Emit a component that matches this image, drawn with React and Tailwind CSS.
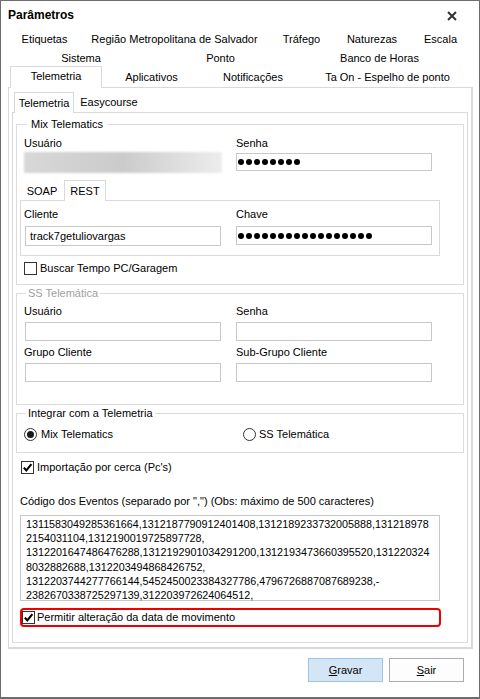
import React from "react";

const TOP_ROW = [
  ["Etiquetas", "w-[69px]"],
  ["Região Metropolitana de Salvador", "w-[191px]"],
  ["Tráfego", "w-[63px]"],
  ["Naturezas", "w-[78px]"],
  ["Escala", "w-[59px]"],
];

const MID_ROW = [
  ["Sistema", "w-[142px]"],
  ["Ponto", "w-[137px]"],
  ["Banco de Horas", "w-[181px]"],
];

const LAST_ROW = [
  ["Aplicativos", "w-[99px]"],
  ["Notificações", "w-[104px]"],
  ["Ta On - Espelho de ponto", "w-[165px]"],
];

const EVENT_LINES = [
  "1311583049285361664,1312187790912401408,1312189233732005888,131218978",
  "2154031104,1312190019725897728,",
  "1312201647486476288,1312192901034291200,1312193473660395520,131220324",
  "8032882688,1312203494868426752,",
  "1312203744277766144,5452450023384327786,4796726887087689238,-",
  "2382670338725297139,312203972624064512,",
];

function Check({ checked }) {
  return (
    <span className="w-[13px] h-[13px] border border-[#333333] bg-white flex items-center justify-center shrink-0">
      {checked && (
        <svg width="11" height="11" viewBox="0 0 11 11">
          <path d="M1.8 5.6 L4.3 8.3 L9.4 2.2" stroke="#000" strokeWidth="2.1" fill="none" />
        </svg>
      )}
    </span>
  );
}

function Radio({ on }) {
  return (
    <span className="w-[13px] h-[13px] rounded-full border border-[#333333] bg-white flex items-center justify-center shrink-0">
      {on && <span className="w-[7px] h-[7px] rounded-full bg-[#1a1a1a]" />}
    </span>
  );
}

function Dots({ count }) {
  return (
    <div className="flex items-center gap-[2px] pl-[1px] h-full">
      {Array.from({ length: count }).map((_, i) => (
        <span key={i} className="w-[6px] h-[6px] rounded-full bg-black" />
      ))}
    </div>
  );
}

function Box({ children, className = "" }) {
  return <div className={`w-[196px] border border-[#c8c8c8] bg-white ${className}`}>{children}</div>;
}

export default function App() {
  return (
    <div className="w-[480px] h-[699px] bg-white border border-b-2 border-[#6d6d6d] flex flex-col text-black text-[11px] leading-[13px] font-['Liberation_Sans',Arial,sans-serif]">
      {/* title bar */}
      <div className="h-[29px] flex items-center justify-between pl-[7px] pr-[22px]">
        <span className="font-bold text-[12px]">Parâmetros</span>
        <svg width="10" height="10" viewBox="0 0 10 10">
          <path d="M1 1L9 9M9 1L1 9" stroke="#333333" strokeWidth="2" />
        </svg>
      </div>

      {/* tab strip */}
      <div className="flex h-[19px] pl-[9px]">
        {TOP_ROW.map(([t, w]) => (
          <div key={t} className={`${w} flex items-center justify-center whitespace-nowrap`}>{t}</div>
        ))}
      </div>
      <div className="flex h-[19px] pl-[9px]">
        {MID_ROW.map(([t, w]) => (
          <div key={t} className={`${w} flex items-center justify-center whitespace-nowrap`}>{t}</div>
        ))}
      </div>
      <div className="flex h-[19px] pl-[9px]">
        <div className="w-[92px] h-[22px] -mt-[2px] border border-b-0 border-[#d9d9d9] bg-white relative z-10 flex items-center justify-center pb-[2px]">
          Telemetria
        </div>
        {LAST_ROW.map(([t, w]) => (
          <div key={t} className={`${w} flex items-center justify-center whitespace-nowrap`}>{t}</div>
        ))}
      </div>

      {/* page */}
      <div className="ml-[7px] w-[465px] h-[562px] border border-b-2 border-r-2 border-[#d9d9d9] pt-[4px] pl-[3px] flex flex-col">
        <div className="flex h-[20px] pl-[2px]">
          <div className="w-[60px] h-[21px] border border-b-0 border-[#d9d9d9] bg-white relative z-10 flex items-center justify-center">
            Telemetria
          </div>
          <div className="w-[70px] flex items-center justify-center">Easycourse</div>
        </div>

        <div className="w-[456px] h-[531px] border border-[#dadada] flex flex-col">
          {/* Mix Telematics */}
          <fieldset className="mt-[5px] ml-[3px] w-[448px] border border-[#dcdcdc] pb-[9px]">
            <legend className="ml-[10px] px-[4px]">Mix Telematics</legend>
            <div className="pt-[6px] pl-[7px] flex">
              <div className="w-[212px]">
                <div>Usuário</div>
                <div className="mt-[2px] w-[198px] h-[21px] bg-linear-to-r from-[#d8d8d8] via-[#cbcbcb] to-[#ededed] blur-[1px]" />
              </div>
              <div>
                <div>Senha</div>
                <Box className="mt-[3px] h-[18px]">
                  <Dots count={8} />
                </Box>
              </div>
            </div>

            <div className="mt-[7px] ml-[3px] flex h-[20px]">
              <div className="w-[44px] flex items-center justify-center pt-[2px]">SOAP</div>
              <div className="w-[42px] h-[21px] border border-b-0 border-[#d9d9d9] bg-white relative z-10 flex items-center justify-center">
                REST
              </div>
            </div>
            <div className="ml-[3px] w-[420px] h-[56px] border border-[#dadada] pt-[7px] pl-[3px] flex">
              <div className="w-[212px]">
                <div>Cliente</div>
                <Box className="mt-[5px] ml-[1px] h-[20px] pl-[4px] flex items-center">track7getuliovargas</Box>
              </div>
              <div>
                <div>Chave</div>
                <Box className="mt-[5px] h-[19px]">
                  <Dots count={17} />
                </Box>
              </div>
            </div>

            <div className="mt-[6px] ml-[7px] flex items-center gap-[3px]">
              <Check />
              <span>Buscar Tempo PC/Garagem</span>
            </div>
          </fieldset>

          {/* SS Telemática (disabled) */}
          <fieldset className="mt-[2px] ml-[3px] w-[448px] border border-[#dcdcdc] pb-[22px]">
            <legend className="ml-[9px] px-[2px] text-[#a0a0a0]">SS Telemática</legend>
            <div className="pt-[5px] pl-[7px] flex">
              <div className="w-[212px]">
                <div>Usuário</div>
                <Box className="mt-[4px] ml-[1px] h-[19px]" />
                <div className="mt-[5px]">Grupo Cliente</div>
                <Box className="mt-[4px] ml-[1px] h-[19px]" />
              </div>
              <div>
                <div>Senha</div>
                <Box className="mt-[4px] h-[19px]" />
                <div className="mt-[5px]">Sub-Grupo Cliente</div>
                <Box className="mt-[4px] h-[19px]" />
              </div>
            </div>
          </fieldset>

          {/* Integrar com a Telemetria */}
          <fieldset className="mt-[2px] ml-[3px] w-[448px] border border-[#dcdcdc] pb-[11px]">
            <legend className="ml-[9px] px-[2px]">Integrar com a Telemetria</legend>
            <div className="pt-[8px] pl-[7px] flex items-center">
              <div className="w-[219px] flex items-center gap-[4px]">
                <Radio on />
                <span>Mix Telematics</span>
              </div>
              <div className="flex items-center gap-[3px]">
                <Radio />
                <span>SS Telemática</span>
              </div>
            </div>
          </fieldset>

          <div className="mt-[8px] ml-[8px] flex items-center gap-[3px]">
            <Check checked />
            <span>Importação por cerca (Pc's)</span>
          </div>

          <div className="mt-[21px] ml-[7px]">Código dos Eventos (separado por ",") (Obs: máximo de 500 caracteres)</div>
          <div className="mt-[7px] ml-[7px] w-[420px] h-[86px] border border-[#c8c8c8] pt-[1px] pl-[5px] text-[10.75px] leading-[14.2px]">
            {EVENT_LINES.map((l) => (
              <div key={l} className="whitespace-nowrap">{l}</div>
            ))}
          </div>

          <div className="mt-[7px] ml-[7px] w-[421px] h-[19px] border-2 border-[#ee0000] rounded-[4px] flex items-center gap-[2px]">
            <Check checked />
            <span>Permitir alteração da data de movimento</span>
          </div>
        </div>
      </div>

      {/* dialog buttons */}
      <div className="mt-[9px] flex justify-end gap-[6px] pr-[15px]">
        <button className="w-[75px] h-[24px] bg-[#d4e5f6] border border-[#9ec4e8] flex items-center justify-center">
          <span><u>G</u>ravar</span>
        </button>
        <button className="w-[75px] h-[24px] bg-[#fdfdfd] border border-[#adadad] flex items-center justify-center">
          <span><u>S</u>air</span>
        </button>
      </div>
    </div>
  );
}
